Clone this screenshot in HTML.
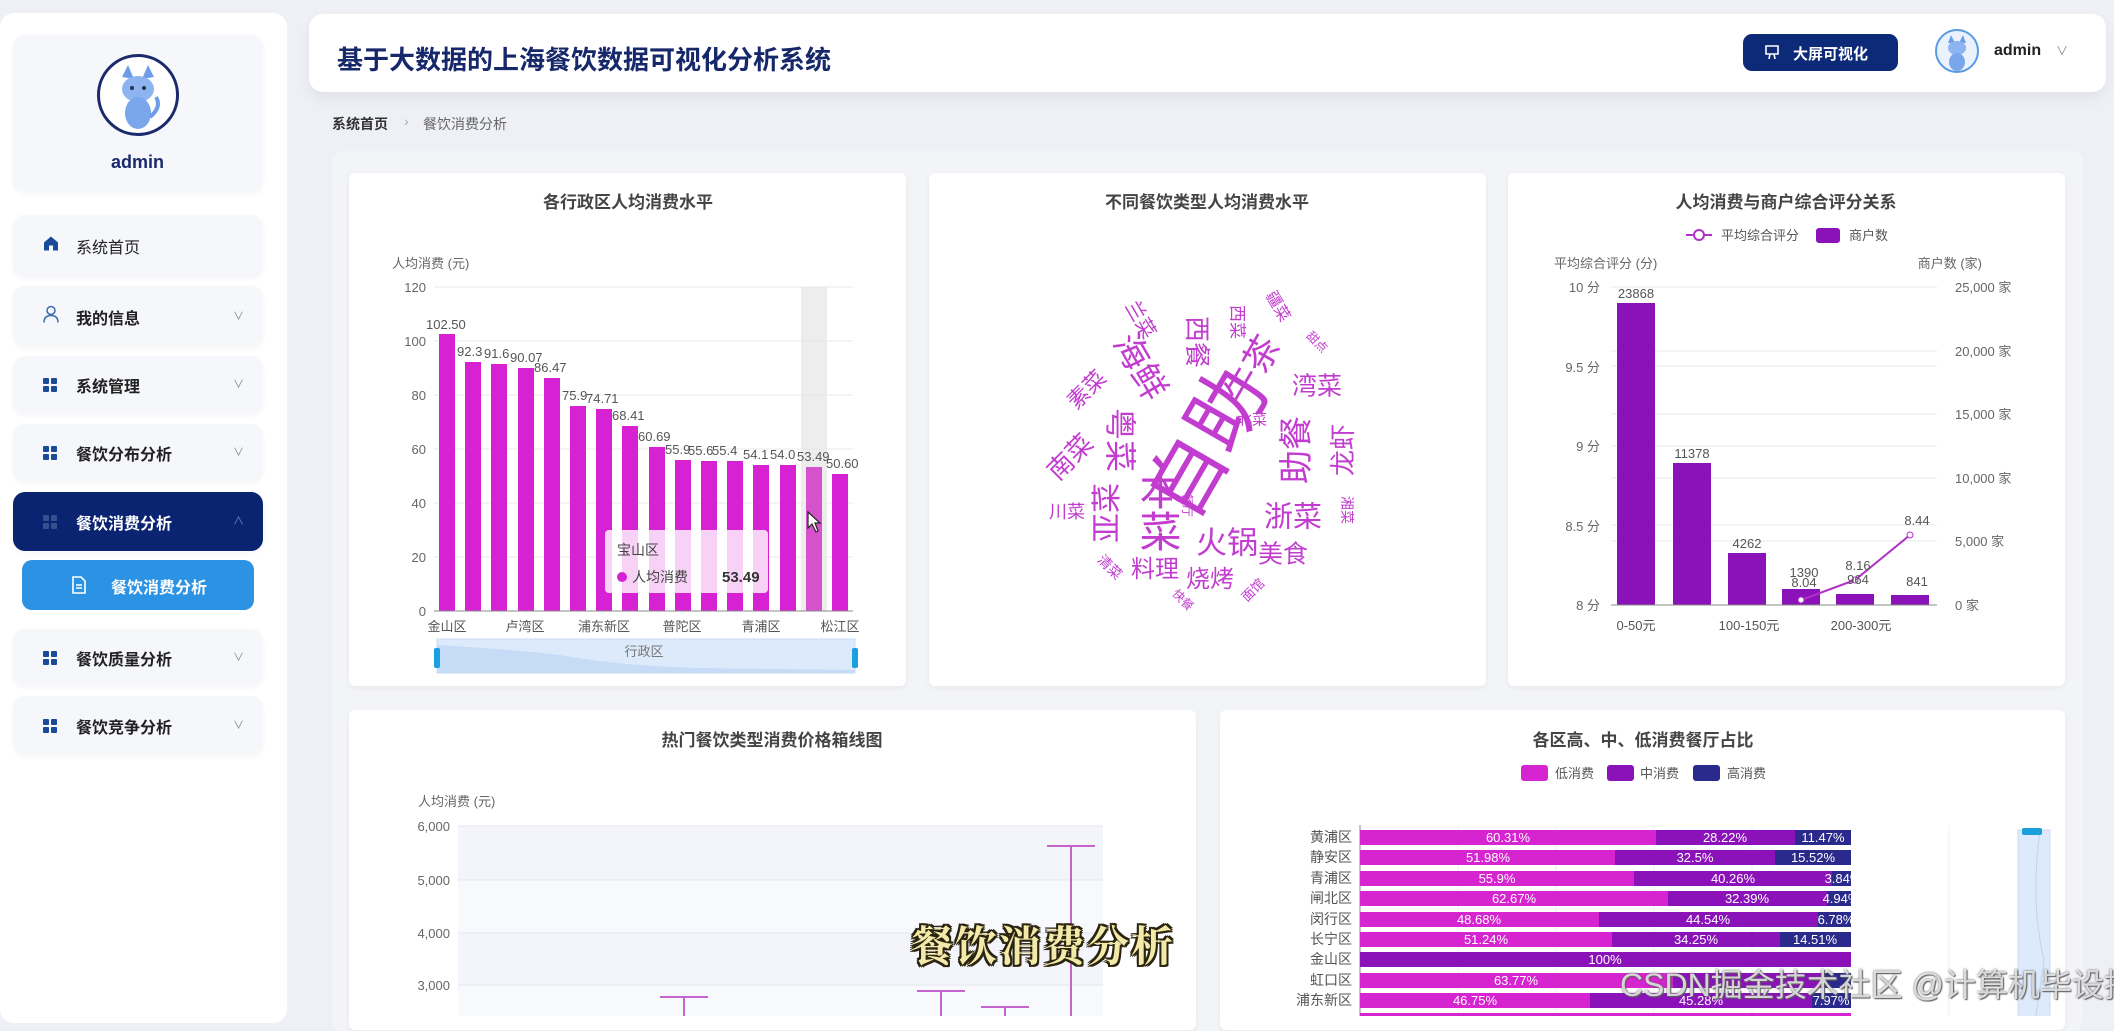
<!DOCTYPE html>
<html><head><meta charset="utf-8">
<style>
*{margin:0;padding:0;box-sizing:border-box}
body{width:2114px;height:1016px;overflow:hidden;background:#eef0f5;font-family:"Liberation Sans","Noto Sans CJK SC",sans-serif;position:relative;color:#333}
.abs{position:absolute}
.side{left:0;top:13px;width:287px;height:1010px;background:#fff;border-radius:14px}
.card{background:#f6f7fb;border-radius:12px;box-shadow:0 2px 6px rgba(0,0,0,.04)}
.mi{position:absolute;left:13px;width:250px;background:#f6f7fb;border-radius:12px;box-shadow:0 2px 6px rgba(0,0,0,.04);font-size:16px;font-weight:bold;color:#222}
.mi .t{position:absolute;left:63px;top:50%;transform:translateY(-50%)}
.mi .ic{position:absolute;left:30px;top:50%;transform:translateY(-50%)}
.mi .cv{position:absolute;left:220px;top:50%;transform:translateY(-60%);font-size:11px;color:#888;font-weight:normal}
.grid4{width:14px;height:14px;display:grid;grid-template-columns:6px 6px;gap:2px}
.grid4 i{background:#1a4a9a;border-radius:1px}
.wc{position:absolute;color:#c23ccf;white-space:nowrap;line-height:1;transform-origin:center}
.ctitle{position:absolute;font-size:17px;font-weight:bold;color:#444;transform:translateX(-50%)}
</style></head><body>

<!-- sidebar -->
<div class="abs side"></div>
<div class="abs card" style="left:13px;top:35px;width:250px;height:157px"></div>
<div class="abs" style="left:97px;top:54px;width:82px;height:82px;border-radius:50%;border:3px solid #1a2a6c;background:#fff;overflow:hidden">
<svg width="76" height="76" viewBox="0 0 76 76"><path d="M22 20 L28 8 L34 22 Z M42 22 L48 8 L54 20Z" fill="#6f9ee8"/><ellipse cx="38" cy="32" rx="16" ry="13" fill="#8db4f0"/><ellipse cx="38" cy="56" rx="13" ry="16" fill="#7aa6ec"/><circle cx="32" cy="31" r="2" fill="#234"/><circle cx="44" cy="31" r="2" fill="#234"/><path d="M50 60 Q62 50 56 40" stroke="#6f9ee8" stroke-width="4" fill="none"/></svg></div>
<div class="abs" style="left:111px;top:152px;font-size:18px;font-weight:bold;color:#1a2a6c">admin</div>

<div class="mi" style="top:215px;height:62px"><span class="ic"><svg width="16" height="16" viewBox="0 0 16 16"><path d="M8 1 L15 7 V15 H10 V10 H6 V15 H1 V7 Z" fill="#1a4a9a"/></svg></span><span class="t" style="font-weight:normal">系统首页</span></div>
<div class="mi" style="top:286px;height:61px"><span class="ic"><svg width="16" height="18" viewBox="0 0 16 18"><circle cx="8" cy="5" r="4" fill="none" stroke="#3a6ab0" stroke-width="1.5"/><path d="M1 17 Q1 10 8 10 Q15 10 15 17" fill="none" stroke="#3a6ab0" stroke-width="1.5"/></svg></span><span class="t">我的信息</span><span class="cv">&#8744;</span></div>
<div class="mi" style="top:356px;height:58px"><span class="ic grid4"><i></i><i></i><i></i><i></i></span><span class="t">系统管理</span><span class="cv">&#8744;</span></div>
<div class="mi" style="top:424px;height:58px"><span class="ic grid4"><i></i><i></i><i></i><i></i></span><span class="t">餐饮分布分析</span><span class="cv">&#8744;</span></div>
<div class="mi" style="top:492px;height:59px;background:#0a2472;color:#fff"><span class="ic grid4"><i style="background:#33508f"></i><i style="background:#33508f"></i><i style="background:#33508f"></i><i style="background:#33508f"></i></span><span class="t">餐饮消费分析</span><span class="cv" style="color:#6f82b3">&#8743;</span></div>
<div class="abs" style="left:22px;top:560px;width:232px;height:50px;background:#2b92e4;border-radius:10px;color:#fff;font-size:16px;font-weight:bold">
<svg class="abs" style="left:50px;top:16px" width="14" height="18" viewBox="0 0 14 18"><path d="M1 1 H9 L13 5 V17 H1 Z" fill="none" stroke="#fff" stroke-width="1.6"/><path d="M4 9 H10 M4 12 H10" stroke="#fff" stroke-width="1.4"/></svg>
<span class="abs" style="left:89px;top:14px">餐饮消费分析</span></div>
<div class="mi" style="top:629px;height:57px"><span class="ic grid4"><i></i><i></i><i></i><i></i></span><span class="t">餐饮质量分析</span><span class="cv">&#8744;</span></div>
<div class="mi" style="top:696px;height:59px"><span class="ic grid4"><i></i><i></i><i></i><i></i></span><span class="t">餐饮竞争分析</span><span class="cv">&#8744;</span></div>

<!-- header -->
<div class="abs" style="left:309px;top:14px;width:1797px;height:78px;background:#fff;border-radius:14px;box-shadow:0 6px 14px rgba(0,0,0,.06)"></div>
<div class="abs" style="left:337px;top:40px;font-size:26px;font-weight:bold;color:#16286a">基于大数据的上海餐饮数据可视化分析系统</div>
<div class="abs" style="left:1743px;top:34px;width:155px;height:37px;background:#0d2a78;border-radius:9px;color:#fff;font-size:15px;font-weight:bold">
<svg class="abs" style="left:22px;top:11px" width="14" height="15" viewBox="0 0 14 15"><path d="M1 1 H13 V9 H1 Z M5 9 L4 14 M9 9 L10 14" fill="none" stroke="#fff" stroke-width="1.6"/></svg>
<span class="abs" style="left:50px;top:9px">大屏可视化</span></div>
<div class="abs" style="left:1935px;top:29px;width:44px;height:44px;border-radius:50%;border:2px solid #5a9ae0;background:#eaf2fd;overflow:hidden"><svg width="40" height="40" viewBox="0 0 40 40"><path d="M11 12 L14 4 L18 12Z M22 12 L26 4 L29 12Z" fill="#6f9ee8"/><ellipse cx="20" cy="17" rx="9" ry="7" fill="#8db4f0"/><ellipse cx="20" cy="31" rx="8" ry="9" fill="#7aa6ec"/></svg></div>
<div class="abs" style="left:1994px;top:42px;font-size:16px;font-weight:bold;color:#222">admin</div>
<div class="abs" style="left:2056px;top:42px;font-size:12px;color:#888">&#8744;</div>

<!-- breadcrumb -->
<div class="abs" style="left:332px;top:114px;font-size:14px;font-weight:bold;color:#333">系统首页</div>
<div class="abs" style="left:404px;top:113px;font-size:14px;color:#aaa">&#8250;</div>
<div class="abs" style="left:423px;top:114px;font-size:14px;color:#666">餐饮消费分析</div>

<!-- content panel -->
<div class="abs" style="left:332px;top:151px;width:1751px;height:880px;background:#f3f4f8;border-radius:10px"></div>
<div class="abs" style="left:349px;top:173px;width:557px;height:513px;background:#fff;border-radius:6px;box-shadow:0 2px 6px rgba(0,0,0,.05)"></div>
<div class="abs" style="left:929px;top:173px;width:557px;height:513px;background:#fff;border-radius:6px;box-shadow:0 2px 6px rgba(0,0,0,.05)"></div>
<div class="abs" style="left:1508px;top:173px;width:557px;height:513px;background:#fff;border-radius:6px;box-shadow:0 2px 6px rgba(0,0,0,.05)"></div>
<div class="abs" style="left:349px;top:710px;width:847px;height:320px;background:#fff;border-radius:6px;box-shadow:0 2px 6px rgba(0,0,0,.05)"></div>
<div class="abs" style="left:1220px;top:710px;width:845px;height:320px;background:#fff;border-radius:6px;box-shadow:0 2px 6px rgba(0,0,0,.05)"></div>

<div class="ctitle" style="left:628px;top:188px">各行政区人均消费水平</div>
<div class="ctitle" style="left:1207px;top:188px">不同餐饮类型人均消费水平</div>
<div class="ctitle" style="left:1786px;top:188px">人均消费与商户综合评分关系</div>
<div class="ctitle" style="left:772px;top:726px">热门餐饮类型消费价格箱线图</div>
<div class="ctitle" style="left:1643px;top:726px">各区高、中、低消费餐厅占比</div>

<svg class="abs" style="left:0;top:0" width="2114" height="1016" font-family="Liberation Sans, Noto Sans CJK SC, sans-serif">
<!-- chart1 -->
<g font-size="13" fill="#666">
<text x="392" y="268">人均消费 (元)</text>
<g text-anchor="end"><text x="426" y="292">120</text><text x="426" y="346">100</text><text x="426" y="400">80</text><text x="426" y="454">60</text><text x="426" y="508">40</text><text x="426" y="562">20</text><text x="426" y="616">0</text></g>
</g>
<g stroke="#e8e8ec" stroke-width="1"><line x1="434" y1="287" x2="853" y2="287"/><line x1="434" y1="341" x2="853" y2="341"/><line x1="434" y1="395" x2="853" y2="395"/><line x1="434" y1="449" x2="853" y2="449"/><line x1="434" y1="503" x2="853" y2="503"/><line x1="434" y1="557" x2="853" y2="557"/></g>
<rect x="801" y="287" width="26" height="324" fill="#e6e6e6" opacity=".7"/>
<g fill="#d622d2">
<rect x="439" y="334" width="16" height="277"/><rect x="465" y="362" width="16" height="249"/><rect x="491" y="364" width="16" height="247"/><rect x="518" y="368" width="16" height="243"/><rect x="544" y="378" width="16" height="233"/><rect x="570" y="406" width="16" height="205"/><rect x="596" y="409" width="16" height="202"/><rect x="622" y="426" width="16" height="185"/><rect x="649" y="447" width="16" height="164"/><rect x="675" y="460" width="16" height="151"/><rect x="701" y="461" width="16" height="150"/><rect x="727" y="461" width="16" height="150"/><rect x="753" y="465" width="16" height="146"/><rect x="780" y="465" width="16" height="146"/><rect x="806" y="467" width="16" height="144" fill="#d552cc"/><rect x="832" y="474" width="16" height="137"/>
</g>
<line x1="434" y1="611" x2="853" y2="611" stroke="#888"/>
<g font-size="13" fill="#555">
<text x="426" y="329">102.50</text><text x="457" y="356">92.3</text><text x="484" y="358">91.6</text><text x="510" y="362">90.07</text><text x="534" y="372">86.47</text><text x="562" y="400">75.9</text><text x="586" y="403">74.71</text><text x="612" y="420">68.41</text><text x="638" y="441">60.69</text><text x="665" y="454">55.9</text><text x="688" y="455">55.6</text><text x="712" y="455">55.4</text><text x="743" y="459">54.1</text><text x="770" y="459">54.0</text><text x="797" y="461">53.49</text><text x="826" y="468">50.60</text>
</g>
<g font-size="13" fill="#555" text-anchor="middle"><text x="447" y="631">金山区</text><text x="525" y="631">卢湾区</text><text x="604" y="631">浦东新区</text><text x="682" y="631">普陀区</text><text x="761" y="631">青浦区</text><text x="840" y="631">松江区</text></g>
<rect x="437" y="639" width="418" height="34" fill="#dceafb" stroke="#c8dcf4"/>
<path d="M437 645 Q520 650 560 655 Q620 666 700 668 L855 670 L855 673 L437 673Z" fill="#c6dcf6"/>
<rect x="434" y="648" width="6" height="20" rx="2" fill="#1aa0e0"/><rect x="852" y="648" width="6" height="20" rx="2" fill="#1aa0e0"/>
<text x="644" y="656" font-size="13" fill="#777" text-anchor="middle">行政区</text>
<rect x="605" y="530" width="163" height="63" rx="4" fill="#fff" opacity=".8"/>
<text x="617" y="555" font-size="14" fill="#444">宝山区</text><circle cx="622" cy="577" r="5" fill="#d622d2"/><text x="632" y="582" font-size="14" fill="#444">人均消费</text><text x="722" y="582" font-size="15" font-weight="bold" fill="#333">53.49</text>
<path d="M808 512 L808 528 L812 524 L816 532 L818 531 L815 523 L820 523Z" fill="#fff" stroke="#222" stroke-width="1.2"/>

<!-- chart3 -->
<line x1="1686" y1="235" x2="1712" y2="235" stroke="#b030c8" stroke-width="2"/><circle cx="1699" cy="235" r="5" fill="#fff" stroke="#b030c8" stroke-width="2"/>
<text x="1721" y="240" font-size="13" fill="#555">平均综合评分</text>
<rect x="1816" y="228" width="24" height="15" rx="3" fill="#8a12b8"/><text x="1849" y="240" font-size="13" fill="#555">商户数</text>
<text x="1554" y="268" font-size="13" fill="#666">平均综合评分 (分)</text><text x="1982" y="268" font-size="13" fill="#666" text-anchor="end">商户数 (家)</text>
<g font-size="13" fill="#666" text-anchor="end"><text x="1600" y="292">10 分</text><text x="1600" y="372">9.5 分</text><text x="1600" y="451">9 分</text><text x="1600" y="531">8.5 分</text><text x="1600" y="610">8 分</text></g>
<g font-size="13" fill="#666"><text x="1955" y="292">25,000 家</text><text x="1955" y="356">20,000 家</text><text x="1955" y="419">15,000 家</text><text x="1955" y="483">10,000 家</text><text x="1955" y="546">5,000 家</text><text x="1955" y="610">0 家</text></g>
<g stroke="#e8e8ec"><line x1="1611" y1="287" x2="1937" y2="287"/><line x1="1611" y1="351" x2="1937" y2="351"/><line x1="1611" y1="366" x2="1937" y2="366"/><line x1="1611" y1="414" x2="1937" y2="414"/><line x1="1611" y1="446" x2="1937" y2="446"/><line x1="1611" y1="478" x2="1937" y2="478"/><line x1="1611" y1="525" x2="1937" y2="525"/><line x1="1611" y1="541" x2="1937" y2="541"/></g>
<g fill="#8a12b8"><rect x="1617" y="303" width="38" height="302"/><rect x="1673" y="463" width="38" height="142"/><rect x="1728" y="553" width="38" height="52"/><rect x="1782" y="589" width="38" height="16"/><rect x="1836" y="594" width="38" height="11"/><rect x="1891" y="595" width="38" height="10"/></g>
<line x1="1611" y1="605" x2="1937" y2="605" stroke="#888"/>
<polyline points="1801,600 1855,580 1910,535" fill="none" stroke="#b030c8" stroke-width="2"/>
<circle cx="1801" cy="600" r="3" fill="#fff" stroke="#b030c8"/><circle cx="1855" cy="580" r="3" fill="#fff" stroke="#b030c8"/><circle cx="1910" cy="535" r="3" fill="#fff" stroke="#b030c8"/>
<g font-size="13" fill="#555" text-anchor="middle"><text x="1636" y="298">23868</text><text x="1692" y="458">11378</text><text x="1747" y="548">4262</text><text x="1804" y="577">1390</text><text x="1804" y="587">8.04</text><text x="1858" y="570">8.16</text><text x="1858" y="584">964</text><text x="1917" y="586">841</text><text x="1917" y="525">8.44</text></g>
<g font-size="13" fill="#555" text-anchor="middle"><text x="1636" y="630">0-50元</text><text x="1749" y="630">100-150元</text><text x="1861" y="630">200-300元</text></g>

<!-- chart4 -->
<text x="418" y="806" font-size="13" fill="#666">人均消费 (元)</text>
<rect x="458" y="826" width="645" height="54" fill="#f3f5fb"/><rect x="458" y="880" width="645" height="53" fill="#f8f9fd"/><rect x="458" y="933" width="645" height="52" fill="#f3f5fb"/><rect x="458" y="985" width="645" height="40" fill="#f8f9fd"/>
<g stroke="#e4e6ee"><line x1="458" y1="826" x2="1103" y2="826"/><line x1="458" y1="880" x2="1103" y2="880"/><line x1="458" y1="933" x2="1103" y2="933"/><line x1="458" y1="985" x2="1103" y2="985"/></g>
<g font-size="13" fill="#666" text-anchor="end"><text x="450" y="831">6,000</text><text x="450" y="885">5,000</text><text x="450" y="938">4,000</text><text x="450" y="990">3,000</text></g>
<g stroke="#c464cf" stroke-width="2"><line x1="660" y1="997" x2="708" y2="997"/><line x1="684" y1="997" x2="684" y2="1016"/><line x1="917" y1="991" x2="965" y2="991"/><line x1="941" y1="991" x2="941" y2="1016"/><line x1="981" y1="1007" x2="1029" y2="1007"/><line x1="1005" y1="1007" x2="1005" y2="1016"/><line x1="1047" y1="846" x2="1095" y2="846"/><line x1="1071" y1="846" x2="1071" y2="1016"/></g>

<!-- chart5 -->
<rect x="1521" y="765" width="27" height="16" rx="3" fill="#d624d0"/><text x="1555" y="778" font-size="13" fill="#555">低消费</text>
<rect x="1607" y="765" width="27" height="16" rx="3" fill="#8a12b8"/><text x="1640" y="778" font-size="13" fill="#555">中消费</text>
<rect x="1693" y="765" width="27" height="16" rx="3" fill="#2a2a8c"/><text x="1727" y="778" font-size="13" fill="#555">高消费</text>
<g stroke="#eef0f4"><line x1="1458" y1="825" x2="1458" y2="1016"/><line x1="1556" y1="825" x2="1556" y2="1016"/><line x1="1654" y1="825" x2="1654" y2="1016"/><line x1="1752" y1="825" x2="1752" y2="1016"/><line x1="1949" y1="825" x2="1949" y2="1016"/></g>
<line x1="1360" y1="825" x2="1360" y2="1016" stroke="#888"/>
<g font-size="14" fill="#555" text-anchor="end"><text x="1352" y="842">黄浦区</text><text x="1352" y="862">静安区</text><text x="1352" y="883">青浦区</text><text x="1352" y="903">闸北区</text><text x="1352" y="924">闵行区</text><text x="1352" y="944">长宁区</text><text x="1352" y="964">金山区</text><text x="1352" y="985">虹口区</text><text x="1352" y="1005">浦东新区</text></g>
<g>
<rect x="1360" y="830" width="296" height="15" fill="#d624d0"/><rect x="1656" y="830" width="139" height="15" fill="#8a12b8"/><rect x="1795" y="830" width="56" height="15" fill="#2a2a8c"/>
<rect x="1360" y="850" width="255" height="15" fill="#d624d0"/><rect x="1615" y="850" width="160" height="15" fill="#8a12b8"/><rect x="1775" y="850" width="76" height="15" fill="#2a2a8c"/>
<rect x="1360" y="871" width="274" height="15" fill="#d624d0"/><rect x="1634" y="871" width="198" height="15" fill="#8a12b8"/><rect x="1832" y="871" width="19" height="15" fill="#2a2a8c"/>
<rect x="1360" y="891" width="308" height="15" fill="#d624d0"/><rect x="1668" y="891" width="159" height="15" fill="#8a12b8"/><rect x="1827" y="891" width="24" height="15" fill="#2a2a8c"/>
<rect x="1360" y="912" width="239" height="15" fill="#d624d0"/><rect x="1599" y="912" width="219" height="15" fill="#8a12b8"/><rect x="1818" y="912" width="33" height="15" fill="#2a2a8c"/>
<rect x="1360" y="932" width="252" height="15" fill="#d624d0"/><rect x="1612" y="932" width="168" height="15" fill="#8a12b8"/><rect x="1780" y="932" width="71" height="15" fill="#2a2a8c"/>
<rect x="1360" y="952" width="491" height="15" fill="#8a12b8"/>
<rect x="1360" y="973" width="313" height="15" fill="#d624d0"/><rect x="1673" y="973" width="148" height="15" fill="#8a12b8"/><rect x="1821" y="973" width="30" height="15" fill="#2a2a8c"/>
<rect x="1360" y="993" width="230" height="15" fill="#d624d0"/><rect x="1590" y="993" width="222" height="15" fill="#8a12b8"/><rect x="1812" y="993" width="39" height="15" fill="#2a2a8c"/>
<rect x="1360" y="1013" width="491" height="5" fill="#d624d0"/>
</g>
<g font-size="13" fill="#fff" text-anchor="middle">
<text x="1508" y="842">60.31%</text><text x="1725" y="842">28.22%</text><text x="1823" y="842">11.47%</text>
<text x="1488" y="862">51.98%</text><text x="1695" y="862">32.5%</text><text x="1813" y="862">15.52%</text>
<text x="1497" y="883">55.9%</text><text x="1733" y="883">40.26%</text><text x="1843" y="883">3.84%</text>
<text x="1514" y="903">62.67%</text><text x="1747" y="903">32.39%</text><text x="1841" y="903">4.94%</text>
<text x="1479" y="924">48.68%</text><text x="1708" y="924">44.54%</text><text x="1836" y="924">6.78%</text>
<text x="1486" y="944">51.24%</text><text x="1696" y="944">34.25%</text><text x="1815" y="944">14.51%</text>
<text x="1605" y="964">100%</text><text x="1516" y="985">63.77%</text>
<text x="1475" y="1005">46.75%</text><text x="1701" y="1005">45.28%</text><text x="1831" y="1005">7.97%</text>
</g>
<rect x="2018" y="830" width="32" height="190" fill="#dceafb" stroke="#c8dcf4"/>
<path d="M2040 832 Q2030 900 2044 960 L2036 1016" stroke="#bcd4f2" fill="none"/>
<rect x="2022" y="828" width="20" height="7" rx="2" fill="#1aa0d8"/>
</svg>

<!-- word cloud -->
<div class="wc" style="left:1207px;top:443px;font-size:78px;transform:translate(-50%,-50%) rotate(-60deg)">自助</div>
<div class="wc" style="left:1197px;top:342px;font-size:26px;transform:translate(-50%,-50%) rotate(90deg)">西餐</div>
<div class="wc" style="left:1237px;top:322px;font-size:17px;transform:translate(-50%,-50%) rotate(90deg)">西菜</div>
<div class="wc" style="left:1277px;top:307px;font-size:16px;transform:translate(-50%,-50%) rotate(60deg)">疆菜</div>
<div class="wc" style="left:1317px;top:342px;font-size:12px;transform:translate(-50%,-50%) rotate(45deg)">甜点</div>
<div class="wc" style="left:1253px;top:370px;font-size:36px;transform:translate(-50%,-50%) rotate(-60deg)">午茶</div>
<div class="wc" style="left:1317px;top:387px;font-size:25px;transform:translate(-50%,-50%)">湾菜</div>
<div class="wc" style="left:1252px;top:420px;font-size:15px;transform:translate(-50%,-50%)">北菜</div>
<div class="wc" style="left:1343px;top:450px;font-size:26px;transform:translate(-50%,-50%) rotate(-90deg)">龙虾</div>
<div class="wc" style="left:1297px;top:450px;font-size:34px;transform:translate(-50%,-50%) rotate(-90deg)">助餐</div>
<div class="wc" style="left:1293px;top:518px;font-size:29px;transform:translate(-50%,-50%)">浙菜</div>
<div class="wc" style="left:1347px;top:510px;font-size:14px;transform:translate(-50%,-50%) rotate(90deg)">湘菜</div>
<div class="wc" style="left:1283px;top:555px;font-size:25px;transform:translate(-50%,-50%)">美食</div>
<div class="wc" style="left:1227px;top:543px;font-size:31px;transform:translate(-50%,-50%)">火锅</div>
<div class="wc" style="left:1210px;top:580px;font-size:24px;transform:translate(-50%,-50%)">烧烤</div>
<div class="wc" style="left:1253px;top:590px;font-size:13px;transform:translate(-50%,-50%) rotate(-45deg)">面馆</div>
<div class="wc" style="left:1183px;top:600px;font-size:12px;transform:translate(-50%,-50%) rotate(45deg)">快餐</div>
<div class="wc" style="left:1155px;top:570px;font-size:24px;transform:translate(-50%,-50%)">料理</div>
<div class="wc" style="left:1110px;top:567px;font-size:14px;transform:translate(-50%,-50%) rotate(45deg)">清菜</div>
<div class="wc" style="left:1067px;top:512px;font-size:18px;transform:translate(-50%,-50%)">川菜</div>
<div class="wc" style="left:1108px;top:513px;font-size:30px;transform:translate(-50%,-50%) rotate(-90deg)">亚菜</div>
<div class="wc" style="left:1157px;top:510px;font-size:42px;writing-mode:vertical-rl;transform:translate(-50%,-50%)">本菜</div>
<div class="wc" style="left:1120px;top:440px;font-size:32px;transform:translate(-50%,-50%) rotate(90deg)">粤菜</div>
<div class="wc" style="left:1070px;top:457px;font-size:26px;transform:translate(-50%,-50%) rotate(-45deg)">南菜</div>
<div class="wc" style="left:1087px;top:390px;font-size:22px;transform:translate(-50%,-50%) rotate(-45deg)">素菜</div>
<div class="wc" style="left:1140px;top:367px;font-size:35px;transform:translate(-50%,-50%) rotate(60deg)">海鲜</div>
<div class="wc" style="left:1140px;top:320px;font-size:20px;transform:translate(-50%,-50%) rotate(60deg)">兰菜</div>
<div class="wc" style="left:1187px;top:505px;font-size:12px;transform:translate(-50%,-50%) rotate(90deg)">餐厅</div>

<!-- overlays -->
<div class="abs" style="left:911px;top:914px;font-size:42px;font-weight:bold;font-family:'Noto Serif CJK SC',serif;color:#f3e9a8;letter-spacing:2px;text-shadow:-2px -2px 0 #2a2410,2px -2px 0 #2a2410,-2px 2px 0 #2a2410,2px 2px 0 #2a2410,0 2px 0 #2a2410,0 -2px 0 #2a2410,2px 0 0 #2a2410,-2px 0 0 #2a2410">餐饮消费分析</div>
<div class="abs" style="left:1620px;top:960px;font-size:32px;color:rgba(255,255,255,.75);white-space:nowrap;text-shadow:0 0 2px #555,1px 1px 1px #666">CSDN掘金技术社区 @计算机毕设指导师</div>
</body></html>
